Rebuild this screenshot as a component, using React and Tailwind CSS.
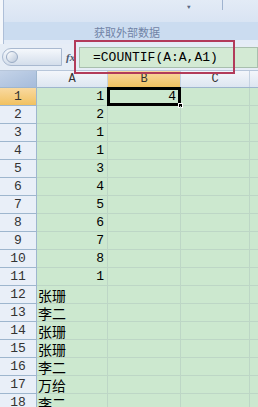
import React from "react";

// Excel 2007 sheet with COUNTIF formula, green "eye-care" background
const colA = [
  "1", "2", "1", "1", "3", "4", "5", "6", "7", "8", "1",
  "张珊", "李二", "张珊", "张珊", "李二", "万给", "李二",
];

const font = { fontFamily: '"Liberation Mono", "Noto Sans CJK SC", monospace' };

const App = () => {
  return (
    <div className="relative w-[258px] h-[407px] overflow-hidden bg-[#cce8cf]" style={font}>
      {/* ribbon */}
      <div className="h-[44px] flex bg-[#dbe6f4]">
        <div className="w-[4px] bg-[#f4f7fb] border-r border-[#aebfd8]" />
        <div className="flex-1 flex flex-col">
          <div className="h-[22px] relative bg-gradient-to-b from-[#e3ebf6] to-[#d9e4f3]">
            <span className="absolute left-[183px] top-[5px] text-[6px] leading-none text-[#5b6b85]">▼</span>
            <div className="absolute left-[218px] top-0 h-[10px] w-px bg-[#9fb3cf]" />
          </div>
          <div className="h-[18px] flex items-center justify-center bg-[#cbdcf0] text-[11px] leading-none text-[#7083a6] pr-[8px] pt-[2px]" style={{ fontFamily: '"Noto Sans CJK SC", sans-serif' }}>
            获取外部数据
          </div>
          <div className="h-[4px] bg-[#e4ecf7]" />
        </div>
      </div>

      {/* formula bar */}
      <div className="h-[27px] flex items-center bg-[#e6edf6] border-b border-[#b7c6da]">
        <div className="ml-[2px] w-[60px] h-[18px] rounded-l-full bg-gradient-to-b from-[#f5f8fc] to-[#d4deeb] border border-[#a9b9d0] flex items-center">
          <div className="ml-[3px] w-[12px] h-[12px] rounded-full bg-gradient-to-br from-white to-[#b9c7da] border border-[#9aabc4]" />
        </div>
        <span className="ml-[4px] w-[12px] text-[11px] leading-none italic font-bold text-[#4b5a70]" style={{ fontFamily: '"Liberation Serif", serif' }}>
          fx
        </span>
        <div className="ml-[1px] flex-1 h-[21px] bg-[#d3ead4] border border-[#a8bfae] flex items-center pl-[13px] text-[13px] leading-none text-black">
          =COUNTIF(A:A,A1)
        </div>
      </div>

      {/* column headers */}
      <div className="h-[17px] flex text-[12px] leading-none text-[#333] bg-gradient-to-b from-[#f3f6fb] to-[#dde6f1] border-b border-[#9eb6ce]">
        <div className="w-[37px] border-r border-[#9eb6ce] bg-gradient-to-br from-[#c4d3e8] to-[#a6bcdb]" />
        <div className="w-[71px] border-r border-[#c5d2e2] flex items-center justify-center">A</div>
        <div className="w-[73px] border-r border-[#c5d2e2] flex items-center justify-center bg-gradient-to-b from-[#f9d99f] to-[#f1c15f]">B</div>
        <div className="w-[69px] border-r border-[#c5d2e2] flex items-center justify-center">C</div>
        <div className="flex-1" />
      </div>

      {/* rows */}
      <div className="flex flex-col">
        {colA.map((v, i) => {
          const isNum = i < 11;
          return (
            <div key={i} className="h-[18px] flex shrink-0 leading-none">
              <div
                className={`w-[37px] flex items-center justify-center text-[13px] text-[#333] border-r border-b border-[#9eb6ce] ${
                  i === 0 ? "bg-gradient-to-b from-[#f9d99f] to-[#f1c15f]" : "bg-[#e9eff8]"
                }`}
              >
                {i + 1}
              </div>
              <div
                className={`w-[71px] flex items-center border-r border-b border-[#bdd6c6] ${
                  isNum ? "justify-end pr-[3px] text-[13px]" : "pl-[1px] text-[14px]"
                } text-black`}
                style={isNum ? font : { fontFamily: '"Noto Sans CJK SC", sans-serif' }}
              >
                {v}
              </div>
              <div className="w-[73px] relative flex items-center justify-end pr-[4px] text-[13px] border-r border-b border-[#bdd6c6]">
                {i === 0 && (
                  <>
                    <div className="absolute -left-[1px] -top-[1px] w-[74px] h-[19px] border-[3px] border-black" />
                    <div className="absolute -right-[3px] -bottom-[3px] w-[5px] h-[5px] bg-black border border-white" />
                    <span className="relative">4</span>
                  </>
                )}
              </div>
              <div className="w-[69px] border-r border-b border-[#bdd6c6]" />
              <div className="flex-1 border-b border-[#bdd6c6]" />
            </div>
          );
        })}
      </div>

      {/* red annotation box */}
      <div className="absolute left-[74px] top-[40px] w-[161px] h-[34px] border-2 border-[#b23b5a]" />
    </div>
  );
};

export default App;
